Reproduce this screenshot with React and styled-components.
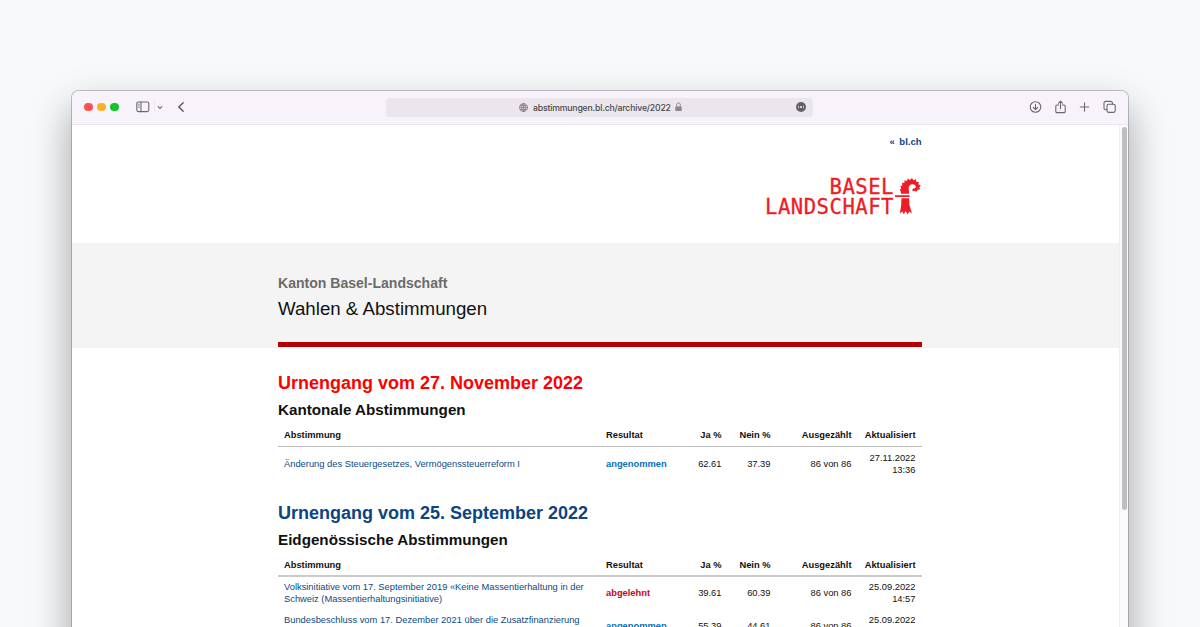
import React from "react";
import styled, { createGlobalStyle } from "styled-components";

const Global = createGlobalStyle`
  * { box-sizing: border-box; }
  html, body { margin: 0; height: 100%; }
  body { background: #f8f9fb; overflow: hidden; font-family: "Liberation Sans", Arial, sans-serif; color: #111; }
`;

const Desktop = styled.div`
  height: 627px;
  padding: 91px 72px 0;
  overflow: hidden;
`;

const Window = styled.div`
  width: 1056px;
  height: 700px;
  background: #fff;
  border-radius: 7px;
  overflow: hidden;
  box-shadow: 0 0 0 1px rgba(120, 120, 128, 0.45), 0 19px 40px rgba(0, 10, 10, 0.38);
`;

const Toolbar = styled.div`
  display: flex;
  align-items: center;
  height: 34px;
  padding: 0 12px 1px 12px;
  background: #f8f3fa;
  border-bottom: 1px solid #ebe7ed;
`;

const Side = styled.div`
  display: flex;
  align-items: center;
  width: 302px;
`;

const Light = styled.span`
  width: 8.6px;
  height: 8.6px;
  margin-right: 4.6px;
  border-radius: 50%;
  background: ${(p) => p.$color};
`;

const Icon = styled.svg`
  display: block;
  flex: none;
  margin-left: ${(p) => p.$gap || 0}px;
  fill: none;
  stroke: ${(p) => p.$color || "#6b686d"};
  stroke-width: ${(p) => p.$weight || 1.1};
  stroke-linecap: round;
  stroke-linejoin: round;
`;

const Divider = styled.span`
  width: 1px;
  height: 12px;
  margin: 0 2px 0 4px;
  background: #ece7ee;
`;

const Address = styled.div`
  display: flex;
  align-items: center;
  width: 427px;
  height: 19px;
  padding: 0 7px 0 133px;
  border-radius: 4px;
  background: #ebe6ec;
`;

const Url = styled.span`
  margin: 0 4px 0 5px;
  padding-top: 1px;
  font: 500 8.7px/12px Inter, sans-serif;
  letter-spacing: -0.18px;
  color: #49464b;
`;

const More = styled.span`
  display: flex;
  align-items: center;
  justify-content: center;
  gap: 1px;
  width: 10px;
  height: 10px;
  margin-left: auto;
  border-radius: 50%;
  background: #656267;
`;

const Dot = styled.i`
  width: 1.2px;
  height: 1.2px;
  border-radius: 50%;
  background: #d8d4d9;
`;

const Actions = styled.div`
  display: flex;
  align-items: center;
  gap: 11.7px;
  margin-left: auto;
`;

const Viewport = styled.div`
  display: flex;
  height: 666px;
`;

const Page = styled.main`
  width: 1047px;
`;

const Gutter = styled.div`
  width: 9px;
  padding: 2px 1px 0 1.5px;
  background: #fafafa;
  border-left: 1px solid #eeeeee;
`;

const Thumb = styled.div`
  width: 5.5px;
  height: 383px;
  border-radius: 3px;
  background: #bfbfbf;
`;

const Container = styled.div`
  width: 643.5px;
  margin-left: 206px;
`;

const Masthead = styled(Container)`
  display: flex;
  flex-direction: column;
  align-items: flex-end;
  height: 118px;
  padding-top: 11px;
`;

const HomeLink = styled.a`
  display: flex;
  gap: 4.5px;
  font: bold 9.5px/12px "Liberation Sans", sans-serif;
  color: #0b4582;
`;

const Brand = styled.div`
  display: flex;
  gap: 1px;
  margin: 29px -2.5px 0 0;
`;

const BrandName = styled.div`
  font: 20.6px/20px "DejaVu Sans Mono", monospace;
  letter-spacing: 0.5px;
  text-align: right;
  color: #ee1c25;
  -webkit-text-stroke: 0.3px #ee1c25;
`;

const Banner = styled.header`
  height: 105px;
  padding-top: 31px;
  background: #f4f4f4;
`;

const Canton = styled.div`
  font: bold 14.05px/18px "Liberation Sans", sans-serif;
  color: #6b6b6b;
`;

const Title = styled.h1`
  margin: 5px 0 21px;
  font: 18.7px/24px "Liberation Sans", sans-serif;
  color: #111;
`;

const Rule = styled.div`
  height: 5px;
  background: #b30000;
`;

const Section = styled.section`
  height: 129.5px;
  &:first-child { margin-top: 24px; }
`;

const Heading = styled.h2`
  margin: 0;
  font: bold 18px/22px "Liberation Sans", sans-serif;
  color: ${(p) => p.$color};
`;

const Subheading = styled.h3`
  margin: 6px 0 9px;
  font: bold 15.2px/20px "Liberation Sans", sans-serif;
`;

const Row = styled.div`
  display: grid;
  grid-template-columns: 322px 86px 41.5px 49px 81px 64px;
  align-items: center;
  height: ${(p) => p.$height || 33}px;
  font-size: 9.33px;
  line-height: 12px;
`;

const HeadRow = styled(Row)`
  height: 18px;
  padding: 0 0 5px;
  font-weight: bold;
  border-bottom: ${(p) => p.$border};
`;

const Cell = styled.div`
  padding: 0 6px;
  text-align: ${(p) => (p.$num ? "right" : "left")};
  white-space: ${(p) => (p.$wrap ? "pre-line" : "nowrap")};
`;

const Subject = styled(Cell)`
  color: #0b4a85;
  white-space: pre-line;
`;

const Result = styled(Cell)`
  font-weight: bold;
  color: ${(p) => (p.$accepted ? "#0571b8" : "#d0021b")};
`;

const sections = [
  {
    title: "Urnengang vom 27. November 2022",
    color: "#ff0000",
    group: "Kantonale Abstimmungen",
    border: "1px solid #bdbdbd",
    height: 33,
    rows: [
      ["Änderung des Steuergesetzes, Vermögenssteuerreform I", true, "62.61", "37.39", "27.11.2022\n13:36"],
    ],
  },
  {
    title: "Urnengang vom 25. September 2022",
    color: "#0b4582",
    group: "Eidgenössische Abstimmungen",
    border: "2px solid #cbcbcb",
    height: 33,
    rows: [
      ["Volksinitiative vom 17. September 2019 «Keine Massentierhaltung in der\nSchweiz (Massentierhaltungsinitiative)", false, "39.61", "60.39", "25.09.2022\n14:57"],
      ["Bundesbeschluss vom 17. Dezember 2021 über die Zusatzfinanzierung\nder AHV durch eine Erhöhung der Mehrwertsteuer", true, "55.39", "44.61", "25.09.2022\n14:57"],
    ],
  },
];

function Crozier() {
  return (
    <svg width="29" height="40" viewBox="0 0 29 40">
      <g fill="#ee1c25">
        <path d="M0 18.2H14.6V20H0Z" />
        <path d="M6 16.8 L5.6 14.2 L4.8 12.4 L6.3 11.5 L5.4 9.1 L7.4 8.4 L7 5.8 L9.4 5.9 L9.5 3.3 L11.9 4 L12.8 1.5 L15 3 L17 1.1 L18.3 3.2 L20.9 2.3 L21.3 4.8 L24 4.9 L23.3 7.3 L25.9 8.6 L24.2 10.5 L25.3 12.2 L22.8 12.8 L21.2 14.8 L19.4 13.8 L17.8 14.5 L17.3 12.3 L18.8 11.6 Q21.4 11.2 20.7 9 Q19.8 6.9 17.2 7.2 Q13.3 7.8 13.7 12 L14.1 16.8Z" />
        <path d="M6.4 21.2H14.1L14.4 28L17 36.6L14.4 34.4L12.6 37.3L10.7 34.1L8.8 37.3L7.3 34.4L4.9 36.8L6.2 28Z" />
      </g>
    </svg>
  );
}

export default function App() {
  return (
    <>
      <Global />
      <Desktop>
        <Window>
          <Toolbar>
            <Side>
              <Light $color="#fb5450" />
              <Light $color="#fbb224" />
              <Light $color="#13c42c" />
              <Icon width="14" height="12" viewBox="0 0 14 12" $gap={12}>
                <rect x="0.8" y="1" width="12" height="9.6" rx="1.6" />
                <path d="M5 1V10.6" />
                <path d="M2.4 3.2H3.4M2.4 4.8H3.4M2.4 6.4H3.4" strokeWidth="0.7" />
              </Icon>
              <Divider />
              <Icon width="6" height="5" viewBox="0 0 6 5"><path d="M1.2 1.6L3 3.3L4.8 1.6" /></Icon>
              <Icon width="8" height="12" viewBox="0 0 8 12" $weight="1.3" $color="#555257" $gap={14}>
                <path d="M6.2 1.8L1.8 6L6.2 10.2" />
              </Icon>
            </Side>
            <Address>
              <Icon width="9" height="9" viewBox="0 0 9 9" $weight="0.7" $color="#77747a">
                <circle cx="4.5" cy="4.5" r="4" />
                <ellipse cx="4.5" cy="4.5" rx="1.9" ry="4" />
                <path d="M4.5 0.5V8.5M0.5 4.5H8.5M1.1 2.5H7.9M1.1 6.5H7.9" />
              </Icon>
              <Url>abstimmungen.bl.ch/archive/2022</Url>
              <Icon width="7" height="10" viewBox="0 0 7 10" $weight="0.9" $color="#8b888d">
                <path d="M1.7 4.5V2.8A1.8 1.9 0 0 1 5.3 2.8V4.5" />
                <rect x="0.3" y="4.4" width="6.4" height="4.6" rx="0.6" fill="#8b888d" stroke="none" />
              </Icon>
              <More><Dot /><Dot /><Dot /></More>
            </Address>
            <Actions>
              <Icon width="13" height="14" viewBox="0 0 13 14">
                <circle cx="6.5" cy="7" r="5.3" />
                <path d="M6.5 4.4V9.4M4.4 7.5L6.5 9.5L8.6 7.5" />
              </Icon>
              <Icon width="13" height="14" viewBox="0 0 13 14">
                <path d="M4.6 5H3A1.2 1.2 0 0 0 1.8 6.2V11.4A1.2 1.2 0 0 0 3 12.6H10A1.2 1.2 0 0 0 11.2 11.4V6.2A1.2 1.2 0 0 0 10 5H8.4M6.5 8.4V1.2M4.5 3.1L6.5 1.1L8.5 3.1" />
              </Icon>
              <Icon width="13" height="14" viewBox="0 0 13 14"><path d="M6.5 2.8V11.2M2.3 7H10.7" /></Icon>
              <Icon width="13" height="14" viewBox="0 0 13 14">
                <rect x="4" y="4.2" width="8.2" height="8.2" rx="1.6" />
                <path d="M3.9 9.8H2.6A1.6 1.6 0 0 1 1 8.2V3A1.6 1.6 0 0 1 2.6 1.4H7.8A1.6 1.6 0 0 1 9.4 3V4.1" />
              </Icon>
            </Actions>
          </Toolbar>
          <Viewport>
            <Page>
              <Masthead>
                <HomeLink><span>«</span><span>bl.ch</span></HomeLink>
                <Brand>
                  <BrandName>BASEL<br />LANDSCHAFT</BrandName>
                  <Crozier />
                </Brand>
              </Masthead>
              <Banner>
                <Container>
                  <Canton>Kanton Basel-Landschaft</Canton>
                  <Title>Wahlen &amp; Abstimmungen</Title>
                  <Rule />
                </Container>
              </Banner>
              <Container>
                {sections.map((s) => (
                  <Section key={s.title}>
                    <Heading $color={s.color}>{s.title}</Heading>
                    <Subheading>{s.group}</Subheading>
                    <HeadRow $border={s.border}>
                      <Cell>Abstimmung</Cell>
                      <Cell>Resultat</Cell>
                      <Cell $num>Ja %</Cell>
                      <Cell $num>Nein %</Cell>
                      <Cell $num>Ausgezählt</Cell>
                      <Cell $num>Aktualisiert</Cell>
                    </HeadRow>
                    {s.rows.map(([subject, accepted, yes, no, updated]) => (
                      <Row key={subject} $height={s.height}>
                        <Subject>{subject}</Subject>
                        <Result $accepted={accepted}>{accepted ? "angenommen" : "abgelehnt"}</Result>
                        <Cell $num>{yes}</Cell>
                        <Cell $num>{no}</Cell>
                        <Cell $num>86 von 86</Cell>
                        <Cell $num $wrap>{updated}</Cell>
                      </Row>
                    ))}
                  </Section>
                ))}
              </Container>
            </Page>
            <Gutter><Thumb /></Gutter>
          </Viewport>
        </Window>
      </Desktop>
    </>
  );
}
